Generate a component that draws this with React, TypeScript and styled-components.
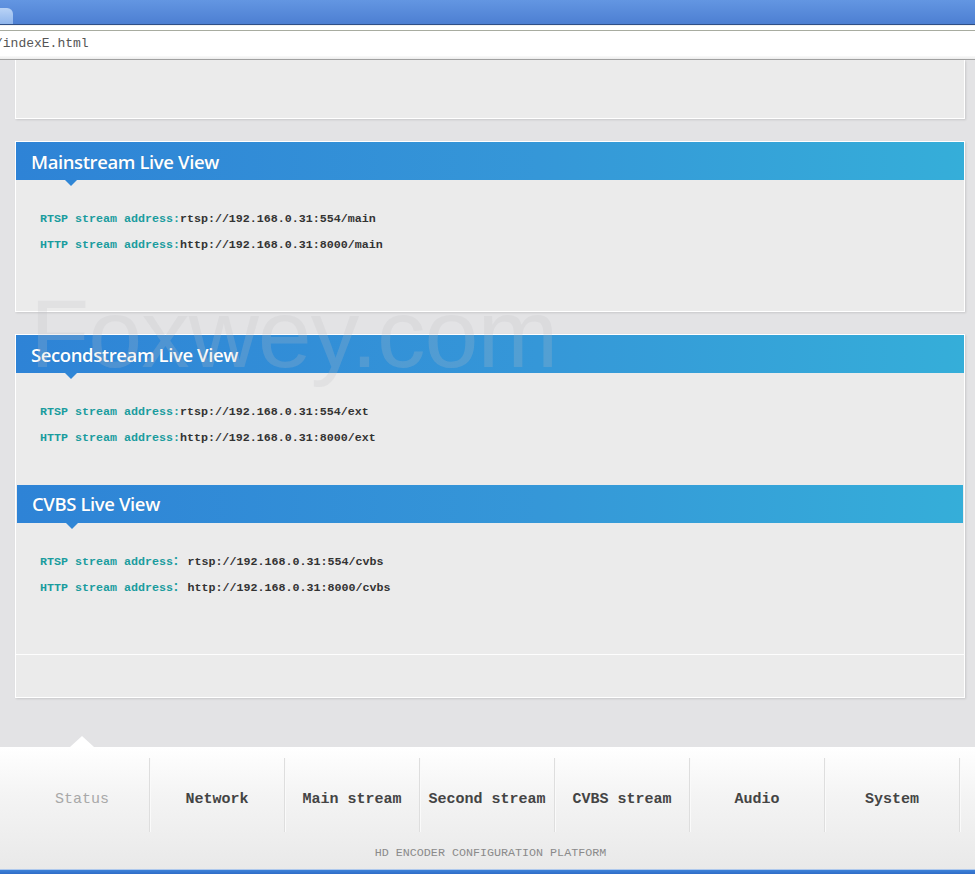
import styled, { createGlobalStyle } from 'styled-components';

const GlobalStyle = createGlobalStyle`
  html, body {
    margin: 0;
    padding: 0;
  }
  body {
    width: 975px;
    height: 874px;
    overflow: hidden;
    background: #e3e3e5;
    font-family: 'Liberation Mono', monospace;
  }
`;

const Window = styled.div`
  position: relative;
  width: 975px;
  height: 874px;
  display: flex;
  flex-direction: column;
  overflow: hidden;
`;

const TitleBar = styled.div`
  height: 24px;
  background: linear-gradient(#6396e2, #4d7fd2);
  border-bottom: 1px solid #2f4f86;
  display: flex;
  align-items: flex-end;
`;

const Tab = styled.div`
  width: 17px;
  height: 16px;
  margin-left: -4px;
  background: linear-gradient(#b9d3f6, #8fb5ec);
  border-radius: 0 6px 0 0;
`;

const AddressBar = styled.div`
  height: 35px;
  background: #fff;
  border-top: 1px solid #f2f2f2;
  box-sizing: border-box;
  display: flex;
  flex-direction: column;
`;

const AddressField = styled.div`
  margin-top: 4px;
  border-top: 1px solid #a8aca0;
  height: 25px;
  display: flex;
  align-items: center;
  font-family: 'Liberation Mono', 'Noto Sans CJK SC', monospace;
  font-size: 13px;
  color: #555;
  text-indent: -5px;
`;

const AddressShade = styled.div`
  flex: 1;
  background: linear-gradient(#fafafa, #ececec);
  border-bottom: 1px solid #a2a2a2;
`;

const Content = styled.div`
  padding: 0 10px 0 15px;
  display: flex;
  flex-direction: column;
`;

const Panel = styled.div<{ $height: number; $gap?: number; $open?: boolean }>`
  height: ${({ $height }) => $height}px;
  margin-top: ${({ $gap }) => $gap ?? 0}px;
  box-sizing: border-box;
  background: #ebebeb;
  border: 1px solid #fff;
  border-top: ${({ $open }) => ($open ? 'none' : '1px solid #fff')};
  box-shadow: 1px 1px 2px rgba(0, 0, 0, 0.12);
  display: flex;
  flex-direction: column;
`;

const Header = styled.div<{ $inset?: boolean }>`
  position: relative;
  height: 38px;
  flex-shrink: 0;
  margin: 0 ${({ $inset }) => ($inset ? '1px' : '0')};
  background: linear-gradient(90deg, #2e83d6 0%, #3597d8 55%, #35aed9 100%);
  display: flex;
  align-items: center;
  padding-left: 15px;
  font-family: 'Open Sans', 'Noto Sans', sans-serif;
  font-size: 18.5px;
  font-weight: 600;
  letter-spacing: -0.4px;
  color: #fff;
  text-shadow: 0 0 1px rgba(0, 0, 0, 0.15);

  &::after {
    content: '';
    position: absolute;
    left: 49px;
    bottom: -6px;
    border-left: 6px solid transparent;
    border-right: 6px solid transparent;
    border-top: 6px solid #2f86d6;
  }
`;

const Body = styled.div<{ $top: number; $height: number }>`
  padding: ${({ $top }) => $top}px 0 0 24px;
  height: ${({ $height }) => $height}px;
  box-sizing: border-box;
  display: flex;
  flex-direction: column;
  gap: 12px;
`;

const Line = styled.div`
  font-family: 'Liberation Mono', 'Noto Sans CJK SC', monospace;
  font-size: 11.67px;
  font-weight: 700;
  line-height: 14px;
  color: #333;
  white-space: pre;
`;

const Label = styled.span<{ $space?: number }>`
  color: #1a9c9e;
  margin-right: ${({ $space }) => $space ?? 0}px;
`;

const Watermark = styled.div`
  position: absolute;
  left: 30px;
  top: 278px;
  font-family: 'Liberation Sans', Arial, sans-serif;
  font-size: 97px;
  letter-spacing: -1px;
  color: rgba(190, 190, 195, 0.22);
  pointer-events: none;
`;

const Spacer = styled.div`
  flex: 1;
`;

const NavBar = styled.div`
  position: relative;
  height: 122px;
  background: linear-gradient(#ffffff 0%, #f4f4f4 40%, #e9e9e9 100%);
  display: flex;
  flex-direction: column;

  &::before {
    content: '';
    position: absolute;
    left: 70px;
    top: -11px;
    border-left: 12px solid transparent;
    border-right: 12px solid transparent;
    border-bottom: 11px solid #fff;
  }
`;

const NavRow = styled.div`
  margin-top: 11px;
  height: 74px;
  display: flex;
`;

const NavItem = styled.div<{ $active?: boolean; $first?: boolean }>`
  width: ${({ $first }) => ($first ? 150 : 135)}px;
  flex-shrink: 0;
  box-sizing: border-box;
  padding-left: ${({ $first }) => ($first ? 15 : 0)}px;
  padding-top: 9px;
  border-right: 1px solid #dedede;
  box-shadow: 1px 0 0 #fafafa;
  display: flex;
  align-items: center;
  justify-content: center;
  font-family: 'Liberation Mono', monospace;
  font-size: 15px;
  font-weight: ${({ $active }) => ($active ? 400 : 700)};
  color: ${({ $active }) => ($active ? '#a8a8a8' : '#444')};
`;

const Footer = styled.div`
  margin-top: 14px;
  text-align: center;
  font-family: 'Liberation Mono', monospace;
  font-size: 11.7px;
  color: #8a8a8a;
  padding-left: 6px;
`;

const BottomStrip = styled.div`
  height: 5px;
  background: linear-gradient(#e8eef8 0%, #3c7fd6 30%, #2f6cc8 100%);
`;

type Entry = { label: string; value: string };

const Lines = ({ items, space }: { items: Entry[]; space?: number }) => (
  <>
    {items.map((it) => (
      <Line key={it.label}>
        <Label $space={space}>{it.label}</Label>
        {it.value}
      </Line>
    ))}
  </>
);

const navItems = ['Status', 'Network', 'Main stream', 'Second stream', 'CVBS stream', 'Audio', 'System'];

export default function App() {
  return (
    <Window>
      <GlobalStyle />
      <TitleBar>
        <Tab />
      </TitleBar>
      <AddressBar>
        <AddressField>/indexE.html</AddressField>
        <AddressShade />
      </AddressBar>
      <Content>
        <Panel $height={59} $open />
        <Panel $height={171} $gap={22}>
          <Header>Mainstream Live View</Header>
          <Body $top={32} $height={132}>
            <Lines
              items={[
                { label: 'RTSP stream address:', value: 'rtsp://192.168.0.31:554/main' },
                { label: 'HTTP stream address:', value: 'http://192.168.0.31:8000/main' },
              ]}
            />
          </Body>
        </Panel>
        <Panel $height={321} $gap={22}>
          <Header>Secondstream Live View</Header>
          <Body $top={32} $height={112}>
            <Lines
              items={[
                { label: 'RTSP stream address:', value: 'rtsp://192.168.0.31:554/ext' },
                { label: 'HTTP stream address:', value: 'http://192.168.0.31:8000/ext' },
              ]}
            />
          </Body>
          <Header $inset>CVBS Live View</Header>
          <Body $top={32} $height={132}>
            <Lines
              space={3}
              items={[
                { label: 'RTSP stream address：', value: 'rtsp://192.168.0.31:554/cvbs' },
                { label: 'HTTP stream address：', value: 'http://192.168.0.31:8000/cvbs' },
              ]}
            />
          </Body>
        </Panel>
        <Panel $height={43} $open />
      </Content>
      <Spacer />
      <NavBar>
        <NavRow>
          {navItems.map((n, i) => (
            <NavItem key={n} $active={i === 0} $first={i === 0}>
              {n}
            </NavItem>
          ))}
        </NavRow>
        <Footer>HD ENCODER CONFIGURATION PLATFORM</Footer>
      </NavBar>
      <BottomStrip />
      <Watermark>Foxwey.com</Watermark>
    </Window>
  );
}
